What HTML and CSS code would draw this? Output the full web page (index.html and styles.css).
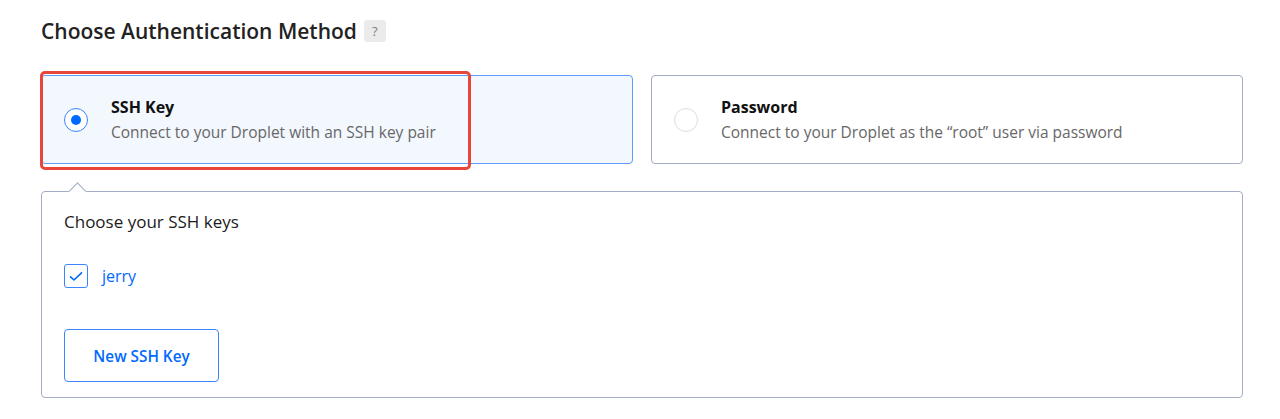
FILE: index.html
```html
<!DOCTYPE html>
<html>
<head>
<meta charset="utf-8">
<link rel="stylesheet" href="styles.css">
</head>
<body>
<div class="page">
  <h2 class="heading">Choose Authentication Method <span class="help">?</span></h2>
  <div class="options">
    <div class="option selected">
      <span class="radio on"></span>
      <div class="option-text">
        <div class="option-title">SSH Key</div>
        <div class="option-desc">Connect to your Droplet with an SSH key pair</div>
      </div>
      <div class="highlight"></div>
    </div>
    <div class="option">
      <span class="radio"></span>
      <div class="option-text">
        <div class="option-title">Password</div>
        <div class="option-desc">Connect to your Droplet as the “root” user via password</div>
      </div>
    </div>
  </div>
  <div class="panel">
    <div class="caret"></div>
    <div class="panel-title">Choose your SSH keys</div>
    <label class="key">
      <span class="checkbox">
        <svg width="14" height="11" viewBox="0 0 14 11"><path d="M1.5 5.8 L5 9 L12.5 1.8" fill="none" stroke="#0069ff" stroke-width="1.6" stroke-linecap="round" stroke-linejoin="round"/></svg>
      </span>
      <span class="key-name">jerry</span>
    </label>
    <button class="btn">New SSH Key</button>
  </div>
</div>
</body>
</html>
```
FILE: styles.css
```css
html, body {
  margin: 0;
  padding: 0;
  background: #fff;
}
body {
  font-family: "Open Sans", "Liberation Sans", sans-serif;
  color: #24292e;
}
.page {
  padding: 17px 37px 0 41px;
}
.heading {
  margin: 0;
  font-size: 21px;
  font-weight: 600;
  line-height: 28px;
  color: #222;
  display: flex;
  align-items: center;
  gap: 7px;
}
.help {
  display: inline-flex;
  align-items: center;
  justify-content: center;
  width: 22px;
  height: 22px;
  border-radius: 3px;
  background: #ebebeb;
  color: #7d7d7d;
  font-size: 13px;
  font-weight: 400;
}
.options {
  margin-top: 30px;
  display: flex;
  gap: 18px;
}
.option {
  position: relative;
  flex: 1;
  height: 89px;
  box-sizing: border-box;
  border: 1px solid #a3acc5;
  border-radius: 4px;
  display: flex;
  align-items: center;
  padding-left: 22px;
  background: #fff;
}
.option.selected {
  border-color: #5c9dff;
  background: #f3f7fe;
}
.radio {
  width: 24px;
  height: 24px;
  box-sizing: border-box;
  border-radius: 50%;
  border: 1px solid #dcdcdc;
  background: #fff;
  display: flex;
  align-items: center;
  justify-content: center;
  flex: none;
}
.radio.on {
  border: 1.5px solid #3b85ff;
}
.radio.on::after {
  content: "";
  width: 10px;
  height: 10px;
  border-radius: 50%;
  background: #0069ff;
}
.option-text {
  margin-left: 23px;
}
.option-title {
  font-size: 16px;
  font-weight: 700;
  color: #111;
  line-height: 20px;
}
.option-desc {
  margin-top: 5px;
  font-size: 15.5px;
  color: #676767;
  line-height: 20px;
}
.highlight {
  position: absolute;
  left: -2px;
  top: -5px;
  width: 431px;
  height: 99px;
  box-sizing: border-box;
  border: 3px solid #e8453c;
  border-radius: 5px;
  pointer-events: none;
}
.panel {
  position: relative;
  margin-top: 27px;
  height: 207px;
  box-sizing: border-box;
  border: 1px solid #a3acc5;
  border-radius: 4px;
  padding: 19px 22px;
}
.caret {
  position: absolute;
  top: -7px;
  left: 29px;
  width: 12px;
  height: 12px;
  background: #fff;
  border-left: 1px solid #a3acc5;
  border-top: 1px solid #a3acc5;
  transform: rotate(45deg);
}
.panel-title {
  font-size: 17px;
  color: #1b1b1b;
  line-height: 22px;
}
.key {
  display: flex;
  align-items: center;
  margin-top: 31px;
  gap: 14px;
}
.checkbox {
  width: 24px;
  height: 24px;
  box-sizing: border-box;
  border: 1px solid #3b85ff;
  border-radius: 3px;
  display: flex;
  align-items: center;
  justify-content: center;
  background: #fff;
}
.key-name {
  color: #0069ff;
  font-size: 16px;
}
.btn {
  display: block;
  margin-top: 41px;
  width: 155px;
  height: 53px;
  background: #fff;
  border: 1px solid #3b85ff;
  border-radius: 4px;
  color: #0069ff;
  font-family: inherit;
  font-size: 15.3px;
  font-weight: 600;
}
```
